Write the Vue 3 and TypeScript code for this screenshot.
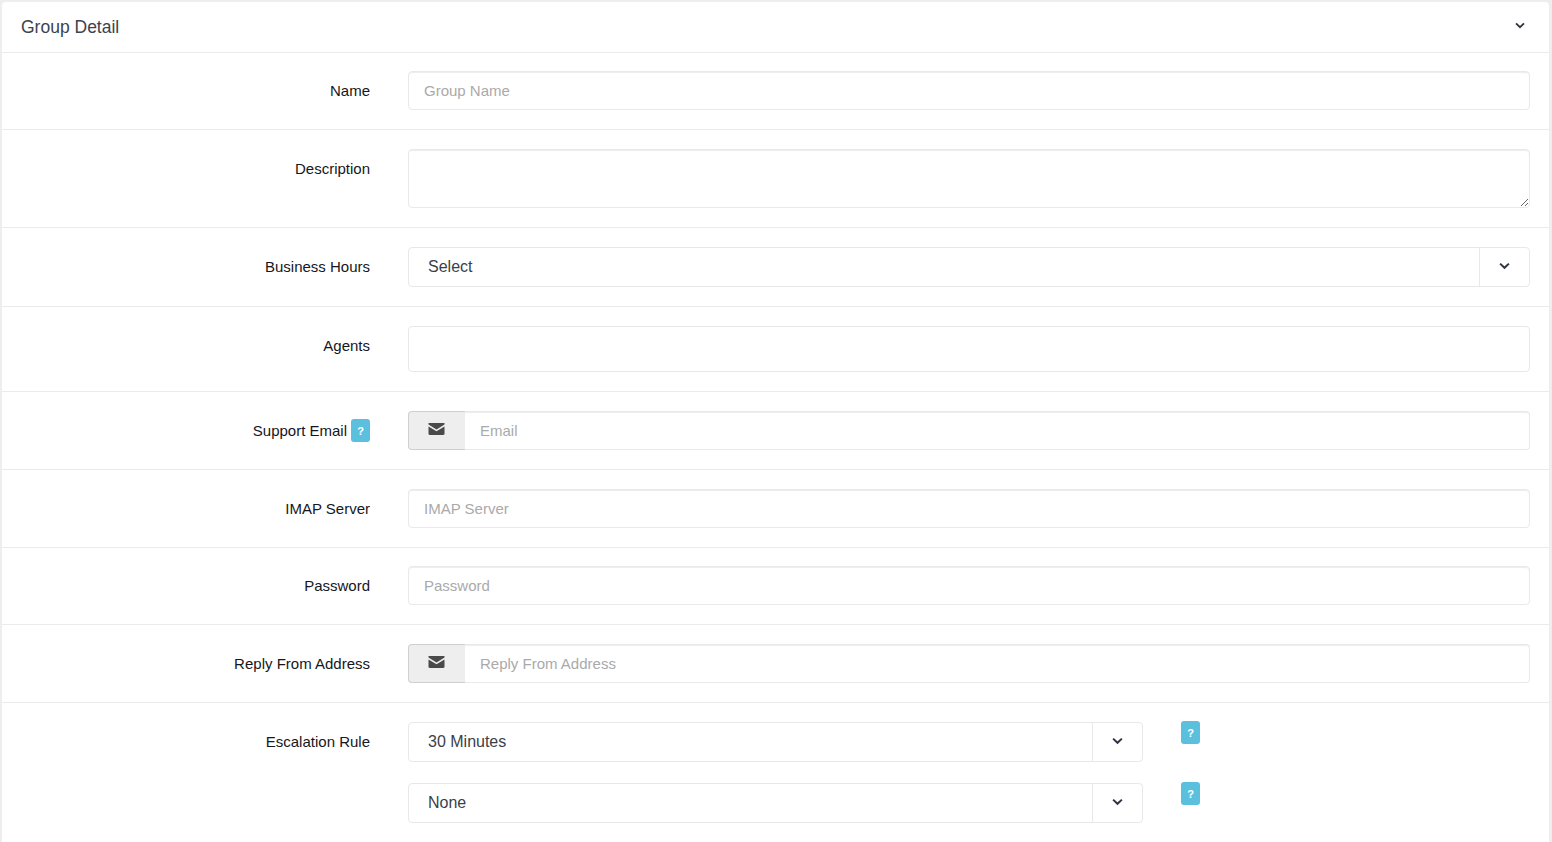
<script setup lang="ts">
</script>

<template>
  <div class="page">
    <section class="card">
      <header class="card-head">
        <h2>Group Detail</h2>
        <svg class="chev head-chev" viewBox="0 0 12 8" width="10" height="7"><path d="M1.2 1.4 6 6l4.8-4.6" /></svg>
      </header>

      <div class="row r-first">
        <label>Name</label>
        <div class="ctl"><input class="field" placeholder="Group Name" /></div>
      </div>

      <div class="row r-desc">
        <label>Description</label>
        <div class="ctl"><textarea class="field area"></textarea></div>
      </div>

      <div class="row r-hours">
        <label>Business Hours</label>
        <div class="ctl">
          <div class="select">
            <span class="sel-text">Select</span>
            <span class="sel-btn"><svg class="chev" viewBox="0 0 12 8" width="11" height="8"><path d="M1.2 1.4 6 6l4.8-4.6" /></svg></span>
          </div>
        </div>
      </div>

      <div class="row r-agents">
        <label>Agents</label>
        <div class="ctl"><div class="tagbox"></div></div>
      </div>

      <div class="row r-std">
        <label>Support Email <span class="help help-inline">?</span></label>
        <div class="ctl">
          <div class="group">
            <span class="addon"><svg viewBox="0 0 17 12" width="17" height="12"><path d="M0.5 0h16v1.6L8.5 6.4.5 1.6z" /><path d="M.5 3.4v7.4c0 .7.5 1.2 1.2 1.2h13.6c.7 0 1.2-.5 1.2-1.2V3.4L8.5 8.2z" /></svg></span>
            <input class="field joined" placeholder="Email" />
          </div>
        </div>
      </div>

      <div class="row r-std">
        <label>IMAP Server</label>
        <div class="ctl"><input class="field" placeholder="IMAP Server" /></div>
      </div>

      <div class="row r-first">
        <label>Password</label>
        <div class="ctl"><input class="field" placeholder="Password" /></div>
      </div>

      <div class="row r-std">
        <label>Reply From Address</label>
        <div class="ctl">
          <div class="group">
            <span class="addon"><svg viewBox="0 0 17 12" width="17" height="12"><path d="M0.5 0h16v1.6L8.5 6.4.5 1.6z" /><path d="M.5 3.4v7.4c0 .7.5 1.2 1.2 1.2h13.6c.7 0 1.2-.5 1.2-1.2V3.4L8.5 8.2z" /></svg></span>
            <input class="field joined" placeholder="Reply From Address" />
          </div>
        </div>
      </div>

      <div class="row r-esc">
        <label>Escalation Rule</label>
        <div class="ctl esc">
          <div class="esc-line">
            <div class="select narrow">
              <span class="sel-text">30 Minutes</span>
              <span class="sel-btn"><svg class="chev" viewBox="0 0 12 8" width="11" height="8"><path d="M1.2 1.4 6 6l4.8-4.6" /></svg></span>
            </div>
            <span class="help">?</span>
          </div>
          <div class="esc-line">
            <div class="select narrow">
              <span class="sel-text">None</span>
              <span class="sel-btn"><svg class="chev" viewBox="0 0 12 8" width="11" height="8"><path d="M1.2 1.4 6 6l4.8-4.6" /></svg></span>
            </div>
            <span class="help">?</span>
          </div>
        </div>
      </div>
    </section>
  </div>
</template>

<style scoped>
.page {
  height: 842px;
  box-sizing: border-box;
  padding: 2px 3px 0 2px;
  overflow: hidden;
  background: #eeeeee;
  font-family: "Liberation Sans", Arial, sans-serif;
}
.card {
  background: #fff;
  border-radius: 4px;
  height: 860px;
}
.card-head {
  height: 51px;
  box-sizing: border-box;
  border-bottom: 1px solid #ebebeb;
  display: flex;
  align-items: center;
  justify-content: space-between;
  padding: 0 24px 0 19px;
}
h2 {
  margin: 0;
  font-size: 17.5px;
  font-weight: 400;
  color: #3b4350;
}
.chev {
  display: block;
  fill: none;
  stroke: #2f3545;
  stroke-width: 2.2;
}
.head-chev {
  position: relative;
  top: -2px;
}
.row {
  display: flex;
  box-sizing: border-box;
  border-bottom: 1px solid #ebebeb;
  padding-top: 19px;
}
.r-first { height: 77px; padding-top: 18px; }
.r-std { height: 78px; }
.r-desc { height: 98px; }
.r-hours { height: 79px; }
.r-agents { height: 85px; }
.r-esc { border-bottom: 0; }
label {
  width: 368px;
  flex: none;
  display: flex;
  justify-content: flex-end;
  align-items: center;
  gap: 4px;
  height: 39px;
  font-size: 15px;
  color: #15171c;
}
.ctl {
  margin-left: 38px;
  width: 1122px;
  flex: none;
}
.field {
  display: block;
  width: 100%;
  height: 39px;
  box-sizing: border-box;
  padding: 0 15px 1px;
  border: 1px solid #e9e9e9;
  border-radius: 4px;
  background: #fff;
  box-shadow: inset 0 1px 1px rgba(0, 0, 0, 0.075);
  outline: 0;
  font: 15px "Liberation Sans", Arial, sans-serif;
  color: #333;
}
.field::placeholder {
  color: #aaaaaa;
  opacity: 1;
}
.area {
  height: 59px;
  resize: vertical;
  padding-top: 8px;
}
.select {
  height: 40px;
  box-sizing: border-box;
  display: flex;
  border: 1px solid #e8e8e8;
  border-radius: 4px;
  color: #3a3f4a;
  font-size: 16px;
}
.sel-text {
  flex: 1;
  padding-left: 19px;
  line-height: 37px;
}
.sel-btn {
  width: 49px;
  flex: none;
  border-left: 1px solid #e8e8e8;
  display: flex;
  align-items: center;
  justify-content: center;
  padding-bottom: 3px;
  box-sizing: content-box;
}
.tagbox {
  height: 46px;
  box-sizing: border-box;
  border: 1px solid #e8e8e8;
  border-radius: 4px;
}
.group {
  display: flex;
}
.addon {
  width: 57px;
  height: 39px;
  flex: none;
  box-sizing: border-box;
  background: #eeeeee;
  border: 1px solid #cfcfcf;
  border-right: 0;
  border-radius: 4px 0 0 4px;
  display: flex;
  justify-content: center;
  padding-top: 11px;
  padding-right: 2px;
}
.addon svg {
  fill: #4a4a4a;
  display: block;
}
.joined {
  border-radius: 0 4px 4px 0;
  border-left: 0;
}
.esc {
  display: flex;
  flex-direction: column;
  gap: 21px;
}
.esc-line {
  display: flex;
  align-items: flex-start;
}
.narrow {
  width: 735px;
  flex: none;
}
.help {
  display: flex;
  align-items: center;
  justify-content: center;
  width: 19px;
  height: 23px;
  border-radius: 3px;
  background: #5bc0de;
  color: #fff;
  font-size: 11px;
  font-weight: 700;
  margin-left: 38px;
  margin-top: -1px;
}
.help-inline {
  margin: 0;
}
</style>

<style>
html, body {
  margin: 0;
  background: #eeeeee;
  overflow: hidden;
}
</style>
